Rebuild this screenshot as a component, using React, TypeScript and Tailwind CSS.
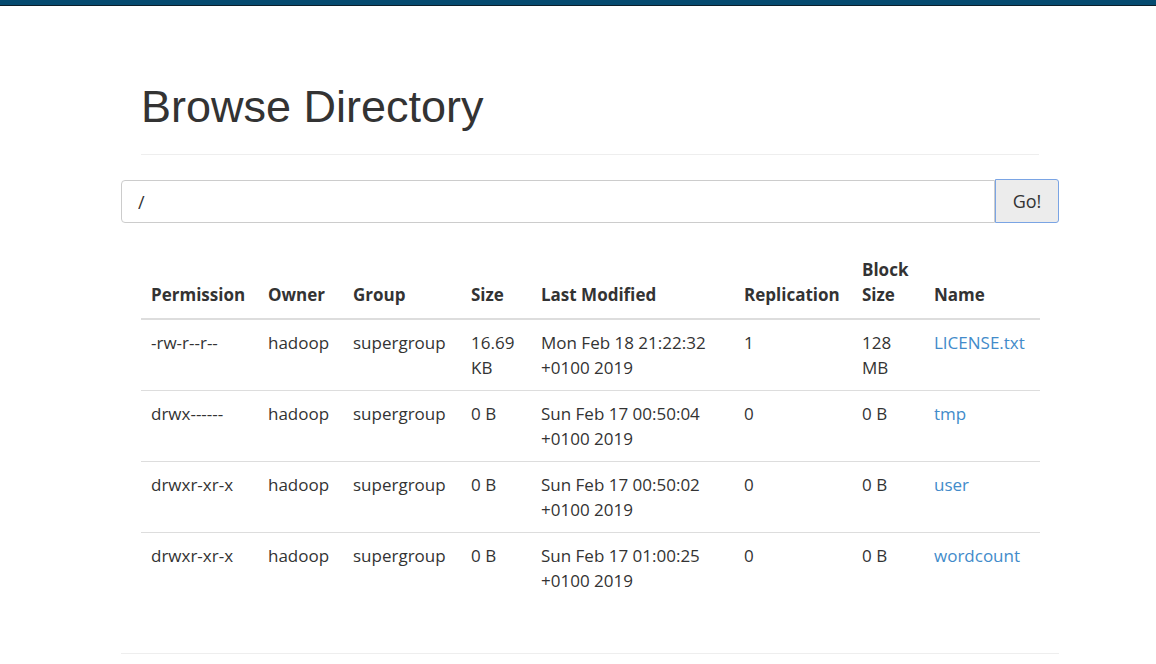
const rows = [
  {
    perm: "-rw-r--r--",
    owner: "hadoop",
    group: "supergroup",
    size: "16.69 KB",
    modified: "Mon Feb 18 21:22:32 +0100 2019",
    repl: "1",
    block: "128 MB",
    name: "LICENSE.txt",
  },
  {
    perm: "drwx------",
    owner: "hadoop",
    group: "supergroup",
    size: "0 B",
    modified: "Sun Feb 17 00:50:04 +0100 2019",
    repl: "0",
    block: "0 B",
    name: "tmp",
  },
  {
    perm: "drwxr-xr-x",
    owner: "hadoop",
    group: "supergroup",
    size: "0 B",
    modified: "Sun Feb 17 00:50:02 +0100 2019",
    repl: "0",
    block: "0 B",
    name: "user",
  },
  {
    perm: "drwxr-xr-x",
    owner: "hadoop",
    group: "supergroup",
    size: "0 B",
    modified: "Sun Feb 17 01:00:25 +0100 2019",
    repl: "0",
    block: "0 B",
    name: "wordcount",
  },
];

const headers = [
  { label: "Permission", w: "w-[117px]" },
  { label: "Owner", w: "w-[85px]" },
  { label: "Group", w: "w-[118px]" },
  { label: "Size", w: "w-[70px]" },
  { label: "Last Modified", w: "w-[203px]" },
  { label: "Replication", w: "w-[118px]" },
  { label: "Block Size", w: "w-[72px]" },
  { label: "Name", w: "w-[116px]" },
];

export default function App() {
  return (
    <div className="min-h-screen bg-white text-[#333] font-['Open_Sans',sans-serif] text-[17px] leading-[25px]">
      <div className="h-[6px] bg-[#054b70] border-b border-[#0b1f2b]"></div>

      <div className="w-[938px] ml-[121px]">
        <div className="px-5">
          <div className="pt-[77px] pb-[23px] border-b border-[#eee]">
            <h1 className="font-['Liberation_Sans',Arial,sans-serif] text-[45px] leading-[48px]">
              Browse Directory
            </h1>
          </div>
        </div>

        <div className="flex mt-[25px]">
          <input
            readOnly
            value="/"
            className="flex-1 h-[43px] border border-[#ccc] rounded-l-[4px] px-4 text-[18px] outline-none"
          />
          <button className="w-[64px] h-[44px] -mt-px bg-[#ececec] border border-[#7aa4e4] rounded-r-[3px] text-[18px]">
            Go!
          </button>
        </div>

        <div className="px-5 mt-[24px]">
          <table className="w-full table-fixed border-collapse">
            <thead>
              <tr>
                {headers.map((h) => (
                  <th
                    key={h.label}
                    className={`${h.w} text-left align-bottom font-bold px-[10px] pt-[10px] pb-[11px] border-b-2 border-[#ddd]`}
                  >
                    {h.label}
                  </th>
                ))}
              </tr>
            </thead>
            <tbody>
              {rows.map((r, i) => (
                <tr key={r.name} className={i < rows.length - 1 ? "border-b border-[#ddd]" : ""}>
                  <td className="align-top px-[10px] py-[10px]">{r.perm}</td>
                  <td className="align-top px-[10px] py-[10px]">{r.owner}</td>
                  <td className="align-top px-[10px] py-[10px]">{r.group}</td>
                  <td className="align-top px-[10px] py-[10px]">{r.size}</td>
                  <td className="align-top px-[10px] py-[10px]">{r.modified}</td>
                  <td className="align-top px-[10px] py-[10px]">{r.repl}</td>
                  <td className="align-top px-[10px] py-[10px]">{r.block}</td>
                  <td className="align-top px-[10px] py-[10px]">
                    <a href="#" className="text-[#428bca]">
                      {r.name}
                    </a>
                  </td>
                </tr>
              ))}
            </tbody>
          </table>
        </div>

        <div className="mt-[50px] border-t border-[#eee]"></div>
      </div>
    </div>
  );
}
